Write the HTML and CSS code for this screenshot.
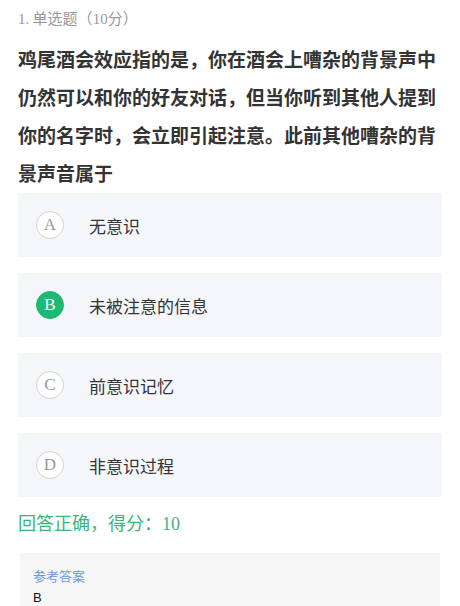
FILE: index.html
```html
<!DOCTYPE html>
<html lang="zh">
<head>
    <meta charset="UTF-8">
    <meta name="viewport" content="width=device-width, initial-scale=1.0">
    <title>单选题</title>
    <link rel="stylesheet" href="styles.css">
</head>
<body>
    <div class="question">
        <div class="question-type"><span class="num">1.</span> 单选题（<span class="num">10</span>分）</div>

        <div class="question-title">
            鸡尾酒会效应指的是，你在酒会上嘈杂的背景声中仍然可以和你的好友对话，但当你听到其他人提到你的名字时，会立即引起注意。此前其他嘈杂的背景声音属于
        </div>

        <div class="options">
            <div class="option">
                <span class="option-letter">A</span>
                <span class="option-text">无意识</span>
            </div>
            <div class="option">
                <span class="option-letter selected">B</span>
                <span class="option-text">未被注意的信息</span>
            </div>
            <div class="option">
                <span class="option-letter">C</span>
                <span class="option-text">前意识记忆</span>
            </div>
            <div class="option">
                <span class="option-letter">D</span>
                <span class="option-text">非意识过程</span>
            </div>
        </div>

        <div class="result">回答正确，得分：<span class="num">10</span></div>

        <div class="answer-box">
            <div class="answer-label">参考答案</div>
            <div class="answer-value">B</div>
        </div>
    </div>
</body>
</html>
```

FILE: styles.css
```css
* {
    margin: 0;
    padding: 0;
    box-sizing: border-box;
}

body {
    background-color: #fff;
    font-family: 'Noto Sans CJK SC', 'Noto Sans', sans-serif;
    color: #333;
    overflow: hidden;
}

.num {
    font-family: 'Liberation Serif', 'Noto Sans CJK SC', serif;
}

.question {
    padding: 6px 18px 0 18px;
}

.question-type {
    font-size: 15px;
    color: #999;
    line-height: 24px;
}

.question-title {
    margin-top: 9px;
    font-size: 19px;
    font-weight: 600;
    line-height: 38px;
    color: #333;
}

.options {
    margin-top: 1px;
    display: flex;
    flex-direction: column;
    gap: 16px;
    width: 424px;
}

.option {
    display: flex;
    align-items: center;
    height: 64px;
    padding-left: 18px;
    background-color: #f5f6fa;
}

.option-letter {
    width: 28px;
    height: 28px;
    border-radius: 50%;
    border: 1px solid #d4d4d4;
    background-color: #fff;
    color: #999;
    font-family: 'Liberation Serif', serif;
    font-size: 17px;
    display: flex;
    justify-content: center;
    align-items: center;
    flex-shrink: 0;
}

.option-letter.selected {
    background-color: #1dba74;
    border-color: #1dba74;
    color: #fff;
}

.option-text {
    margin-left: 25px;
    font-size: 17px;
    color: #333;
}

.result {
    margin-top: 13px;
    font-size: 18px;
    color: #3db47c;
    line-height: 24px;
}

.answer-box {
    margin-top: 17px;
    margin-left: 2px;
    width: 420px;
    background-color: #f6f6f6;
    padding: 13px 13px 20px 13px;
    min-height: 80px;
}

.answer-label {
    font-size: 13px;
    color: #6a98e0;
    line-height: 20px;
}

.answer-value {
    font-family: 'Liberation Sans', sans-serif;
    font-size: 13px;
    color: #111;
    line-height: 20px;
    margin-top: 2px;
}
```
